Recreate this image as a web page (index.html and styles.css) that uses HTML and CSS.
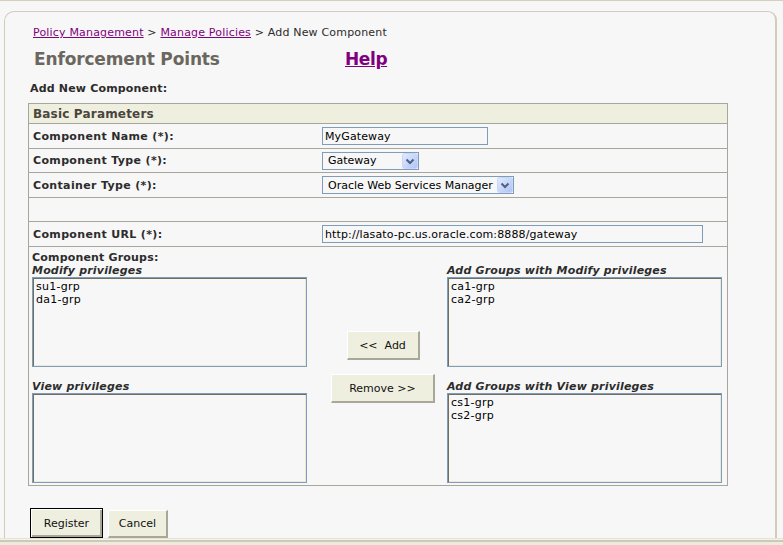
FILE: index.html
```html
<!DOCTYPE html>
<html lang="en">
<head>
    <meta charset="UTF-8">
    <title>Add New Component</title>
    <link rel="stylesheet" href="styles.css">
</head>
<body>
    <div class="panel">
        <div class="crumbs">
            <a href="#">Policy Management</a> &gt; <a href="#">Manage Policies</a> &gt; Add New Component
        </div>

        <div class="title-row">
            <h1>Enforcement Points</h1>
            <a class="help" href="#">Help</a>
        </div>

        <div class="subhead">Add New Component:</div>

        <table class="form-table">
            <tr class="head-row">
                <th colspan="2">Basic Parameters</th>
            </tr>
            <tr class="tall">
                <td class="label">Component Name (*):</td>
                <td class="field"><input class="text short" type="text" value="MyGateway"></td>
            </tr>
            <tr>
                <td class="label">Component Type (*):</td>
                <td class="field">
                    <span class="combo-wrap">
                        <select class="combo type-combo"><option>Gateway</option></select>
                        <svg class="combo-arrow" width="16" height="16" viewBox="0 0 16 16">
                            <defs>
                                <linearGradient id="arrowBg1" x1="0" y1="0" x2="1" y2="1">
                                    <stop offset="0" stop-color="#e3ebfe"/>
                                    <stop offset="1" stop-color="#aec3f4"/>
                                </linearGradient>
                            </defs>
                            <rect x="0.5" y="0.5" width="15" height="15" rx="2" fill="url(#arrowBg1)" stroke="#c9d7fb"/>
                            <path d="M4.5 6.5 L8 10 L11.5 6.5" fill="none" stroke="#4d6185" stroke-width="2"/>
                        </svg>
                    </span>
                </td>
            </tr>
            <tr class="tall">
                <td class="label">Container Type (*):</td>
                <td class="field">
                    <span class="combo-wrap">
                        <select class="combo container-combo"><option>Oracle Web Services Manager</option></select>
                        <svg class="combo-arrow" width="16" height="16" viewBox="0 0 16 16">
                            <defs>
                                <linearGradient id="arrowBg2" x1="0" y1="0" x2="1" y2="1">
                                    <stop offset="0" stop-color="#e3ebfe"/>
                                    <stop offset="1" stop-color="#aec3f4"/>
                                </linearGradient>
                            </defs>
                            <rect x="0.5" y="0.5" width="15" height="15" rx="2" fill="url(#arrowBg2)" stroke="#c9d7fb"/>
                            <path d="M4.5 6.5 L8 10 L11.5 6.5" fill="none" stroke="#4d6185" stroke-width="2"/>
                        </svg>
                    </span>
                </td>
            </tr>
            <tr>
                <td class="label"></td>
                <td class="field"></td>
            </tr>
            <tr class="tall">
                <td class="label">Component URL (*):</td>
                <td class="field"><input class="text long" type="text" value="http://lasato-pc.us.oracle.com:8888/gateway"></td>
            </tr>
            <tr>
                <td colspan="2" class="groups">
                    <div class="groups-title">Component Groups:</div>
                    <div class="groups-grid">
                        <div class="group-col">
                            <div class="list-label">Modify privileges</div>
                            <select class="listbox" multiple>
                                <option>su1-grp</option>
                                <option>da1-grp</option>
                            </select>
                            <div class="list-label second">View privileges</div>
                            <select class="listbox" multiple></select>
                        </div>
                        <div class="move-col">
                            <button class="btn add">&lt;&lt;&nbsp; Add</button>
                            <button class="btn remove">Remove &gt;&gt;</button>
                        </div>
                        <div class="group-col">
                            <div class="list-label">Add Groups with Modify privileges</div>
                            <select class="listbox" multiple>
                                <option>ca1-grp</option>
                                <option>ca2-grp</option>
                            </select>
                            <div class="list-label second">Add Groups with View privileges</div>
                            <select class="listbox" multiple>
                                <option>cs1-grp</option>
                                <option>cs2-grp</option>
                            </select>
                        </div>
                    </div>
                </td>
            </tr>
        </table>

        <div class="actions">
            <button class="btn register">Register</button>
            <button class="btn cancel">Cancel</button>
        </div>
    </div>
    <div class="statusbar"></div>
</body>
</html>
```

FILE: styles.css
```css
html, body {
    margin: 0;
    padding: 0;
    height: 100%;
}
body {
    box-sizing: border-box;
    display: flex;
    flex-direction: column;
    overflow: hidden;
    background: #f7f7f7;
    border-top: 1px solid #d6cfbd;
    font-family: "DejaVu Sans", Verdana, sans-serif;
    font-size: 11px;
    letter-spacing: 0.18px;
    color: #2c2c2c;
}
.panel {
    flex: 1;
    margin: 10px 6px 0 4px;
    padding: 14px 0 0 23px;
    border: 1px solid #d3ccb8;
    border-right-width: 2px;
    border-bottom: none;
    border-radius: 10px 9px 0 0;
}
.crumbs {
    margin-left: 5px;
    line-height: 13px;
}
.crumbs a {
    color: #800080;
}
.title-row {
    display: flex;
    align-items: baseline;
    margin: 10px 0 0 6px;
    height: 20px;
}
.title-row h1 {
    margin: 0;
    width: 311px;
    font-size: 17px;
    line-height: 20px;
    letter-spacing: -0.15px;
    color: #6b675f;
}
.help {
    font-size: 17px;
    font-weight: bold;
    letter-spacing: -0.4px;
    color: #800080;
}
.subhead {
    margin: 13px 0 0 2px;
    font-weight: bold;
    line-height: 13px;
}

/* form table */
.form-table {
    margin-top: 8px;
    width: 700px;
    border-collapse: collapse;
    border: 1px solid #a6a69c;
}
.form-table th {
    height: 19px;
    padding: 0 0 0 4px;
    text-align: left;
    font-size: 12px;
    color: #4a463e;
    background: #efefdf;
    border-bottom: 1px solid #a6a69c;
}
.form-table td {
    height: 23px;
    padding: 0;
    border-bottom: 1px solid #a6a69c;
    vertical-align: middle;
}
.form-table tr.tall td {
    height: 24px;
}
.form-table td.label {
    width: 289px;
    padding-left: 4px;
    font-weight: bold;
    letter-spacing: 0.35px;
}
.text {
    box-sizing: border-box;
    height: 18px;
    padding: 0 2px;
    border: 1px solid #7f9db9;
    background: #f7f7f7;
    font-family: "DejaVu Sans", Verdana, sans-serif;
    font-size: 11px;
    letter-spacing: 0.12px;
    color: #000;
    vertical-align: middle;
}
.text.short {
    width: 166px;
}
.text.long {
    width: 381px;
}
.combo-wrap {
    position: relative;
    display: inline-block;
    vertical-align: middle;
}
.combo {
    -webkit-appearance: none;
    appearance: none;
    box-sizing: border-box;
    display: block;
    height: 18px;
    margin: 0;
    padding: 0 0 0 5px;
    border: 1px solid #7f9db9;
    border-radius: 0;
    background: #f7f7f7;
    font-family: "DejaVu Sans", Verdana, sans-serif;
    font-size: 11px;
    color: #000;
}
.type-combo {
    width: 97px;
}
.container-combo {
    width: 192px;
}
.combo-arrow {
    position: absolute;
    top: 1px;
    right: 1px;
}

/* component groups */
.form-table td.groups {
    padding: 4px 0 2px 3px;
}
.groups-title {
    font-weight: bold;
    line-height: 13px;
}
.groups-grid {
    display: grid;
    grid-template-columns: 275px 140px 275px;
}
.list-label {
    font-weight: bold;
    font-style: italic;
    line-height: 13px;
}
.list-label.second {
    margin-top: 13px;
}
.listbox {
    display: block;
    box-sizing: border-box;
    width: 275px;
    height: 90px;
    margin: 0;
    padding: 2px 2px;
    border: 1px solid #7f9db9;
    border-radius: 0;
    background: #f7f7f7;
    box-shadow: inset 1px 1px 0 #716f64, inset -1px -1px 0 #ece9d8;
    font-family: "DejaVu Sans", Verdana, sans-serif;
    font-size: 11px;
    letter-spacing: 0.25px;
    color: #000;
    overflow: hidden;
}
.listbox option {
    padding: 0 1px;
    min-height: 0;
    line-height: 12px;
}
.move-col {
    display: flex;
    flex-direction: column;
    align-items: center;
    padding-left: 12px;
}

/* buttons */
.btn {
    box-sizing: border-box;
    padding: 0;
    border-style: solid;
    border-width: 1px 2px 2px 1px;
    border-color: #ffffff #a9a898 #a9a898 #ffffff;
    background: #efefe0;
    font-family: "DejaVu Sans", Verdana, sans-serif;
    font-size: 11px;
    color: #111;
}
.btn.add {
    width: 73px;
    height: 29px;
    margin-top: 67px;
}
.btn.remove {
    width: 104px;
    height: 29px;
    margin-top: 14px;
}
.actions {
    display: flex;
    align-items: flex-end;
    margin: 22px 0 0 2px;
}
.btn.register {
    width: 73px;
    height: 30px;
    border: 1px solid #000;
    box-shadow: inset 1px 1px 0 #fff, inset -2px -2px 0 #a9a898;
}
.btn.cancel {
    width: 60px;
    height: 28px;
    margin-left: 5px;
}
.statusbar {
    height: 7px;
    flex: none;
    background: linear-gradient(to bottom, #e6e3d2 0, #e6e3d2 1px, #f4f3e8 1px, #f4f3e8 2px, #cdc9b6 2px, #cdc9b6 4px, #ecebdf 4px);
}
```
